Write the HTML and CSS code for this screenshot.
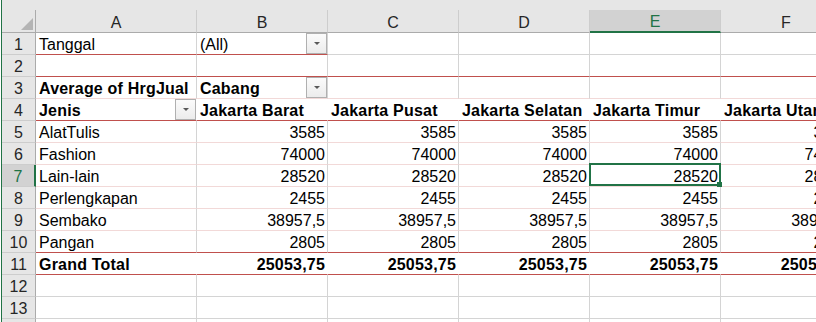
FILE: index.html
```html
<!DOCTYPE html>
<html lang="en">
<head>
  <meta charset="UTF-8">
  <title>Pivot - Average of HrgJual</title>
  <link rel="stylesheet" href="styles.css">
</head>
<body>
  <div class="sheet">
    <div class="strip"></div>

    <!-- column headers -->
    <div class="corner"><span class="tri"></span></div>
    <div class="colh">A</div>
    <div class="colh">B</div>
    <div class="colh">C</div>
    <div class="colh">D</div>
    <div class="colh sel">E</div>
    <div class="colh">F</div>

    <!-- report filter -->
    <div class="rowh">1</div>
    <div class="cell rb">Tanggal</div>
    <div class="cell rb split">(All)<span class="dd"></span></div>
    <div class="cell"></div>
    <div class="cell"></div>
    <div class="cell"></div>
    <div class="cell"></div>

    <div class="rowh">2</div>
    <div class="cell rb"></div>
    <div class="cell rb"></div>
    <div class="cell rb"></div>
    <div class="cell rb"></div>
    <div class="cell rb"></div>
    <div class="cell rb"></div>

    <!-- pivot header -->
    <div class="rowh">3</div>
    <div class="cell pb b">Average of HrgJual</div>
    <div class="cell pb b split">Cabang<span class="dd"></span></div>
    <div class="cell pb"></div>
    <div class="cell pb"></div>
    <div class="cell pb"></div>
    <div class="cell pb"></div>

    <div class="rowh">4</div>
    <div class="cell rb nv b split">Jenis<span class="dd"></span></div>
    <div class="cell rb nv b">Jakarta Barat</div>
    <div class="cell rb nv b">Jakarta Pusat</div>
    <div class="cell rb nv b">Jakarta Selatan</div>
    <div class="cell rb nv b">Jakarta Timur</div>
    <div class="cell rb nv b">Jakarta Utara</div>

    <!-- data rows -->
    <div class="rowh">5</div>
    <div class="cell pb">AlatTulis</div>
    <div class="cell pb num">3585</div>
    <div class="cell pb num">3585</div>
    <div class="cell pb num">3585</div>
    <div class="cell pb num">3585</div>
    <div class="cell pb num">3585</div>

    <div class="rowh">6</div>
    <div class="cell pb">Fashion</div>
    <div class="cell pb num">74000</div>
    <div class="cell pb num">74000</div>
    <div class="cell pb num">74000</div>
    <div class="cell pb num">74000</div>
    <div class="cell pb num">74000</div>

    <div class="rowh sel">7</div>
    <div class="cell pb">Lain-lain</div>
    <div class="cell pb num">28520</div>
    <div class="cell pb num">28520</div>
    <div class="cell pb num">28520</div>
    <div class="cell pb num active">28520<span class="handle"></span></div>
    <div class="cell pb num">28520</div>

    <div class="rowh">8</div>
    <div class="cell pb">Perlengkapan</div>
    <div class="cell pb num">2455</div>
    <div class="cell pb num">2455</div>
    <div class="cell pb num">2455</div>
    <div class="cell pb num">2455</div>
    <div class="cell pb num">2455</div>

    <div class="rowh">9</div>
    <div class="cell pb">Sembako</div>
    <div class="cell pb num">38957,5</div>
    <div class="cell pb num">38957,5</div>
    <div class="cell pb num">38957,5</div>
    <div class="cell pb num">38957,5</div>
    <div class="cell pb num">38957,5</div>

    <div class="rowh">10</div>
    <div class="cell rb">Pangan</div>
    <div class="cell rb num">2805</div>
    <div class="cell rb num">2805</div>
    <div class="cell rb num">2805</div>
    <div class="cell rb num">2805</div>
    <div class="cell rb num">2805</div>

    <div class="rowh">11</div>
    <div class="cell rb nv b">Grand Total</div>
    <div class="cell rb nv b num">25053,75</div>
    <div class="cell rb nv b num">25053,75</div>
    <div class="cell rb nv b num">25053,75</div>
    <div class="cell rb nv b num">25053,75</div>
    <div class="cell rb nv b num">25053,75</div>

    <!-- empty rows -->
    <div class="rowh">12</div>
    <div class="cell"></div>
    <div class="cell"></div>
    <div class="cell"></div>
    <div class="cell"></div>
    <div class="cell"></div>
    <div class="cell"></div>

    <div class="rowh">13</div>
    <div class="cell"></div>
    <div class="cell"></div>
    <div class="cell"></div>
    <div class="cell"></div>
    <div class="cell"></div>
    <div class="cell"></div>

    <div class="rowh">14</div>
    <div class="cell"></div>
    <div class="cell"></div>
    <div class="cell"></div>
    <div class="cell"></div>
    <div class="cell"></div>
    <div class="cell"></div>
  </div>
</body>
</html>
```

FILE: styles.css
```css
body {
  margin: 0;
  background: #fff;
  overflow: hidden;
  font-family: "Liberation Sans", Arial, sans-serif;
  font-size: 16px;
  color: #000;
}
.sheet {
  display: grid;
  grid-template-columns: 34px 161px repeat(5, 131px);
  grid-template-rows: 10px 23px repeat(14, 22px);
  width: 853px;
  margin-left: 1px;
  border-left: 1px solid #217346;
}
.strip {
  grid-column: 1 / -1;
  background: #e6e6e6;
}
.corner, .colh, .rowh, .cell {
  box-sizing: border-box;
  display: flex;
  align-items: flex-end;
  line-height: 18px;
  white-space: nowrap;
}
.corner {
  justify-content: flex-end;
  padding: 0 2px 2px 0;
  background: #e6e6e6;
  border-right: 1px solid #ababab;
  border-bottom: 1px solid #ababab;
}
.tri {
  width: 0;
  height: 0;
  border-left: 12px solid transparent;
  border-bottom: 12px solid #b4b4b4;
}
.colh {
  justify-content: center;
  background: #e6e6e6;
  color: #262626;
  border-right: 1px solid #cdcdcd;
  border-bottom: 1px solid #ababab;
}
.colh.sel {
  background: #d2d2d2;
  color: #217346;
  border-bottom: 2px solid #217346;
}
.rowh {
  justify-content: center;
  background: #e6e6e6;
  color: #262626;
  border-right: 1px solid #ababab;
  border-bottom: 1px solid #cdcdcd;
}
.rowh.sel {
  background: #d2d2d2;
  color: #217346;
  border-right: 2px solid #217346;
}
.cell {
  padding: 0 2px 0 3px;
  border-right: 1px solid #d4d4d4;
  border-bottom: 1px solid #d4d4d4;
}
.rb {
  border-bottom-color: #c0504d;
}
.pb {
  border-bottom-color: #f2d9d8;
}
.nv {
  border-right-color: transparent;
}
.b {
  font-weight: bold;
  letter-spacing: 0.2px;
}
.num {
  justify-content: flex-end;
}
.split {
  justify-content: space-between;
  padding-right: 0;
}
.dd {
  align-self: stretch;
  box-sizing: border-box;
  width: 21px;
  display: flex;
  align-items: center;
  justify-content: center;
  border: 1px solid #b0b0b0;
  background: linear-gradient(#fbfbfb, #ececec);
}
.dd::after {
  content: "";
  width: 0;
  height: 0;
  border-left: 3px solid transparent;
  border-right: 3px solid transparent;
  border-top: 3px solid #595959;
}
.active {
  position: relative;
}
.active::before {
  content: "";
  position: absolute;
  left: -1px;
  top: -2px;
  right: -1px;
  bottom: 0;
  border: 2px solid #217346;
}
.handle {
  position: absolute;
  right: -2px;
  bottom: -1px;
  width: 5px;
  height: 5px;
  background: #217346;
}
```
